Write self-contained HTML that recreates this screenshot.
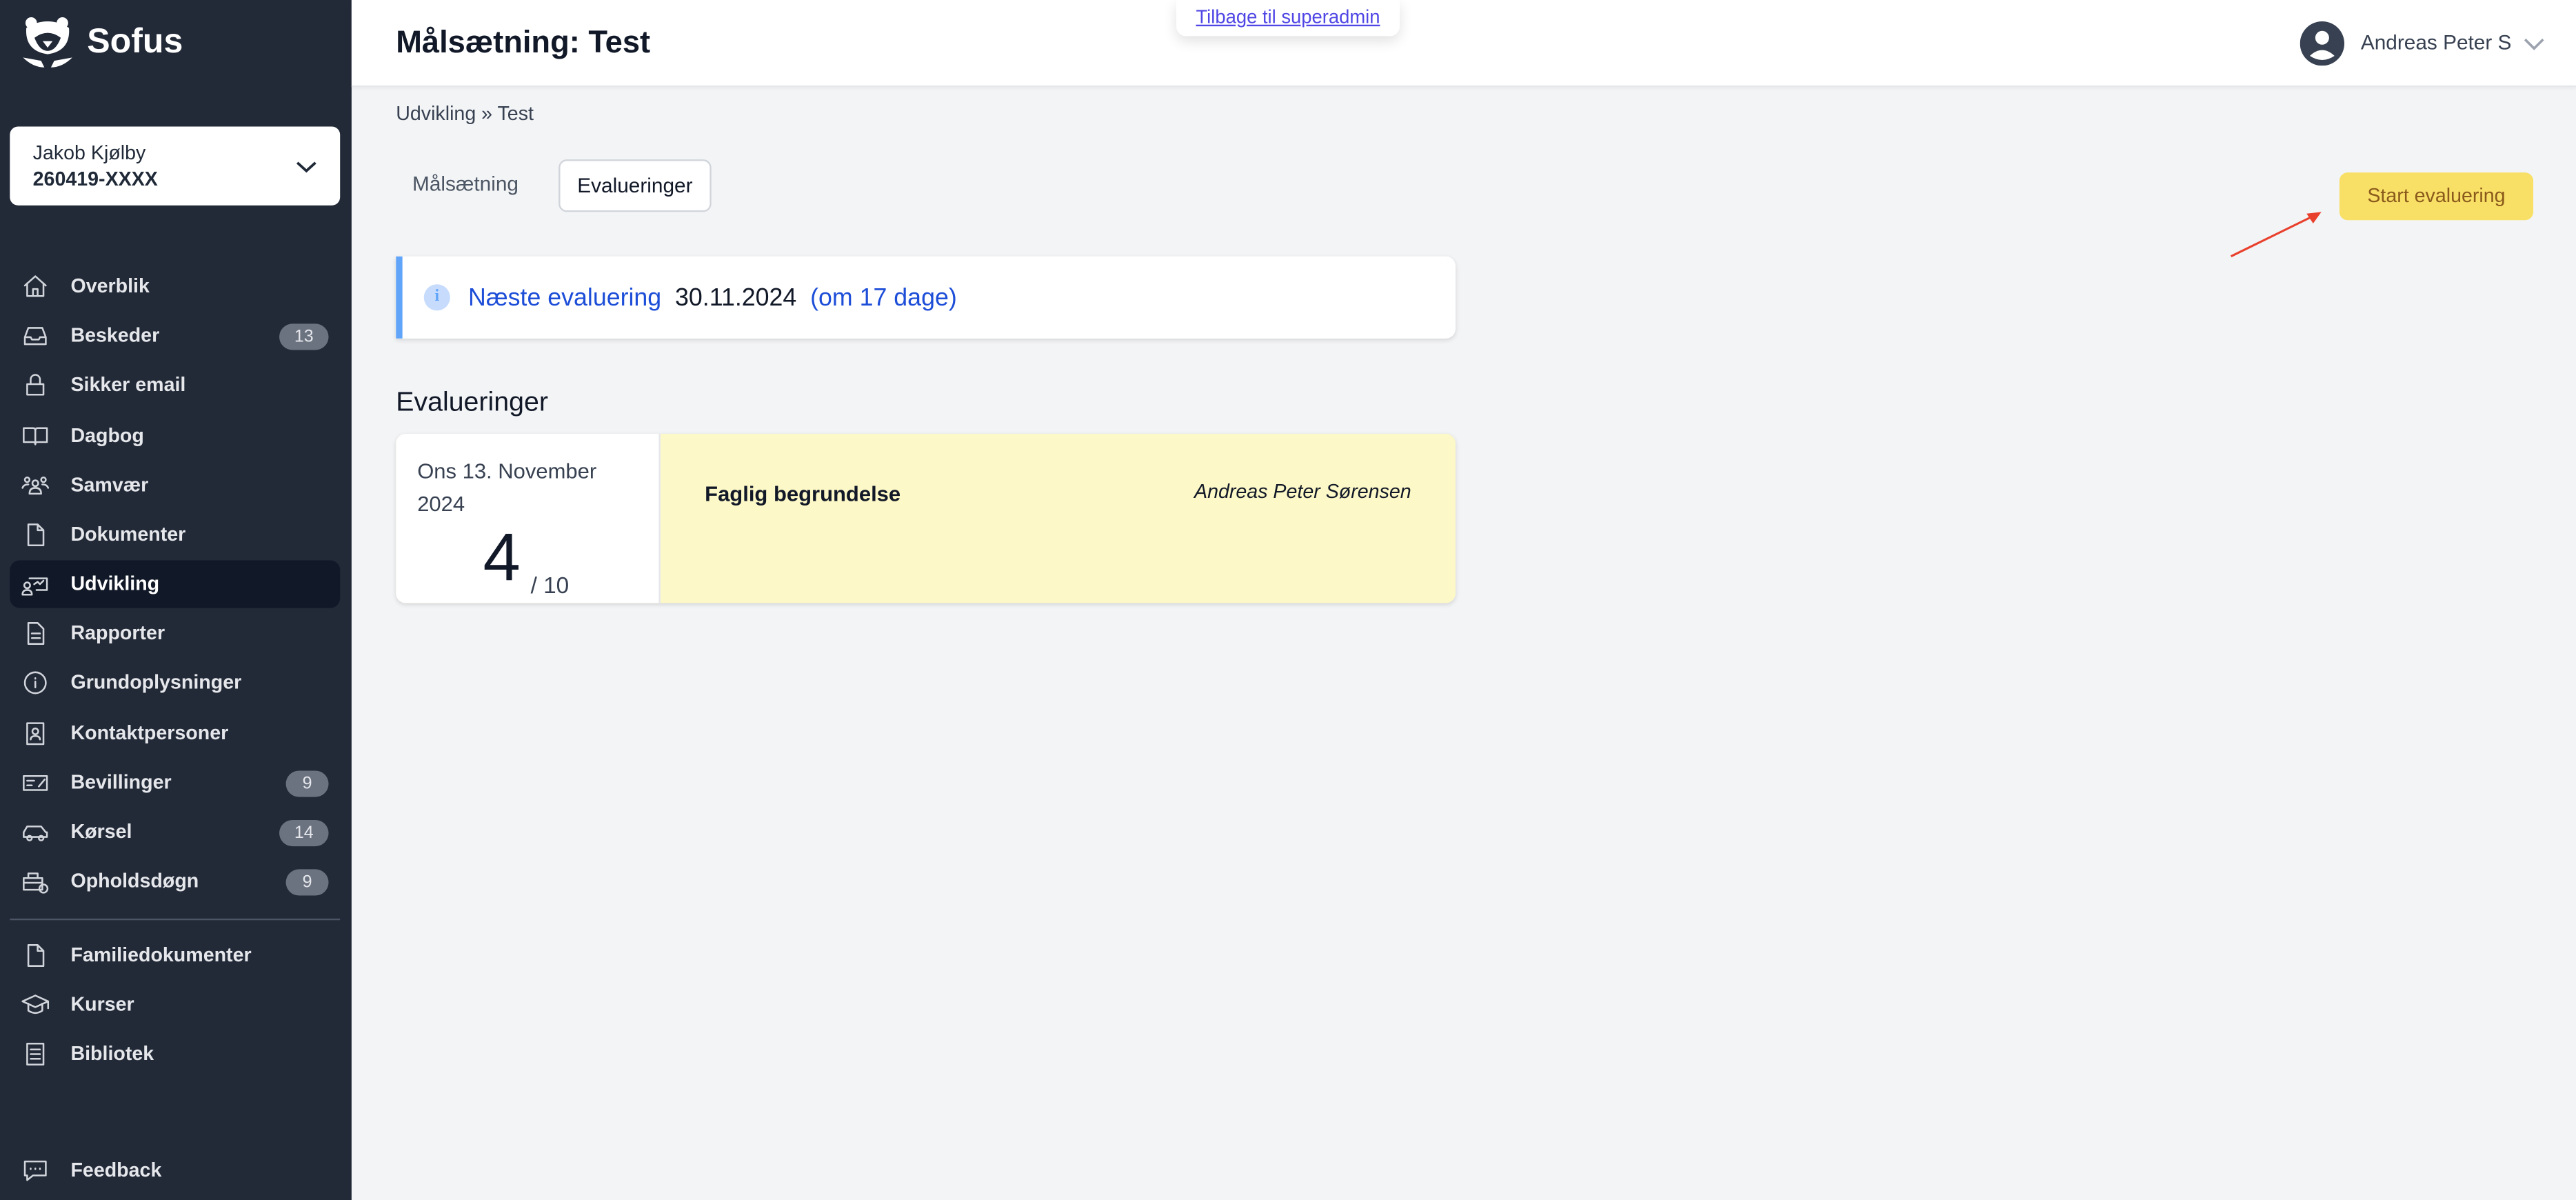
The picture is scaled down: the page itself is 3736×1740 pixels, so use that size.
<!DOCTYPE html>
<html><head><meta charset="utf-8"><style>
*{box-sizing:border-box;margin:0;padding:0}
html,body{width:3736px;height:1740px;overflow:hidden;background:#f3f4f6}
#w{width:1568px;height:731px;transform:scale(2.38265);transform-origin:0 0;position:relative;font-family:"Liberation Sans",sans-serif;background:#f3f4f6}
.sb{position:absolute;left:0;top:0;width:214px;height:731px;background:#222937}
.a{position:absolute}
.nav{position:absolute;left:6px;width:201px;height:29px;color:#e5e7eb;font-size:12px;font-weight:bold;line-height:29px;padding-left:37px;border-radius:6px}
.nav svg{position:absolute;left:7px;top:6px;width:17px;height:17px;fill:none;stroke:#d1d5db;stroke-width:1.5;stroke-linecap:round;stroke-linejoin:round}
.bd{position:absolute;right:7px;top:7px;height:16px;line-height:16px;background:#6b7280;color:#e5e7eb;font-size:10.5px;border-radius:8px;text-align:center;font-weight:normal}
</style></head><body><div id="w">
<div class="sb">
 <svg class="a" style="left:12px;top:9px" width="34" height="34" viewBox="0 0 34 34"><g fill="#fff"><circle cx="7" cy="5" r="3.5"/><circle cx="26" cy="5" r="3.5"/><path d="M4 8 Q3 22 17 24 Q31 22 30 8 Q24 4 17 4 Q10 4 4 8Z"/><path d="M2 26 Q8 32 15 32 L13 28Z M32 26 Q26 32 19 32 L21 28Z"/></g><path d="M9 14 Q17 8 25 14 Q22 22 17 22 Q12 22 9 14Z" fill="#222937"/><path d="M14 16 L20 16 L17 20Z" fill="#fff"/></svg>
 <div class="a" style="left:53px;top:14px;color:#fff;font-size:21px;font-weight:bold">Sofus</div>
 <div class="a" style="left:6px;top:77px;width:201px;height:48px;background:#fff;border-radius:5px;padding:8px 14px;font-size:12px;color:#1f2937;line-height:16px">Jakob Kjølby<br><b>260419-XXXX</b>
  <svg class="a" style="right:14px;top:20px" width="13" height="9" viewBox="0 0 13 9"><path d="M1 2 L6.5 7 L12 2" fill="none" stroke="#1f2937" stroke-width="1.6"/></svg></div>
 <div class="nav" style="top:160px"><svg viewBox="0 0 24 24"><path d="M3 11 L12 3 L21 11 M5 9 V20 H19 V9 M10 20 V14 H14 V20"/></svg>Overblik</div>
 <div class="nav" style="top:190px"><svg viewBox="0 0 24 24"><path d="M3 13 L6 5 H18 L21 13 V19 H3Z M3 13 H8 L9 15 H15 L16 13 H21"/></svg>Beskeder<span class="bd" style="width:30px">13</span></div>
 <div class="nav" style="top:220px"><svg viewBox="0 0 24 24"><path d="M8 11 V7 A4 4 0 0 1 16 7 V11 M5 11 H19 V20 H5Z"/></svg>Sikker email</div>
 <div class="nav" style="top:251px"><svg viewBox="0 0 24 24"><path d="M2 5 H10 Q12 5 12 7 V19 Q12 17 10 17 H2Z M22 5 H14 Q12 5 12 7 V19 Q12 17 14 17 H22Z"/></svg>Dagbog</div>
 <div class="nav" style="top:281px"><svg viewBox="0 0 24 24"><circle cx="12" cy="10" r="2.5"/><circle cx="5" cy="7" r="2"/><circle cx="19" cy="7" r="2"/><path d="M7 19 Q7 14 12 14 Q17 14 17 19Z M1 14 Q2 11 6 11 M23 14 Q22 11 18 11"/></svg>Samvær</div>
 <div class="nav" style="top:311px"><svg viewBox="0 0 24 24"><path d="M6 3 H14 L19 8 V21 H6Z M14 3 V8 H19"/></svg>Dokumenter</div>
 <div class="nav" style="top:341px;background:#111827;color:#fff"><svg viewBox="0 0 24 24"><path d="M7 7 H22 V17 H13 M11 12 L14 10 L16 12 L19 9"/><circle cx="5" cy="13" r="2.5"/><path d="M1 21 Q1 17 5 17 Q9 17 9 21Z"/></svg>Udvikling</div>
 <div class="nav" style="top:371px"><svg viewBox="0 0 24 24"><path d="M6 3 H14 L19 8 V21 H6Z M9 12 H16 M9 16 H16"/></svg>Rapporter</div>
 <div class="nav" style="top:401px"><svg viewBox="0 0 24 24"><circle cx="12" cy="12" r="9"/><path d="M12 11 V16 M12 8 V8.5"/></svg>Grundoplysninger</div>
 <div class="nav" style="top:432px"><svg viewBox="0 0 24 24"><path d="M5 3 H19 V21 H5Z"/><circle cx="12" cy="10" r="2.5"/><path d="M8 17 Q8 14 12 14 Q16 14 16 17"/></svg>Kontaktpersoner</div>
 <div class="nav" style="top:462px"><svg viewBox="0 0 24 24"><path d="M2 6 H22 V18 H2Z M5 10 H11 M5 14 H9 M15 15 L20 9"/></svg>Bevillinger<span class="bd" style="width:26px">9</span></div>
 <div class="nav" style="top:492px"><svg viewBox="0 0 24 24"><path d="M2 16 V12 L5 7 H17 L21 12 H22 V16 Z"/><circle cx="7" cy="17" r="2"/><circle cx="17" cy="17" r="2"/></svg>Kørsel<span class="bd" style="width:30px">14</span></div>
 <div class="nav" style="top:522px"><svg viewBox="0 0 24 24"><path d="M2 9 H18 V19 H2Z M2 13 H18 M6 9 V5 H14 V9"/><circle cx="19" cy="18" r="3.5"/></svg>Opholdsdøgn<span class="bd" style="width:26px">9</span></div>
 <div class="a" style="left:6px;top:559px;width:201px;height:1px;background:#4b5563"></div>
 <div class="nav" style="top:567px"><svg viewBox="0 0 24 24"><path d="M6 3 H14 L19 8 V21 H6Z M14 3 V8 H19"/></svg>Familiedokumenter</div>
 <div class="nav" style="top:597px"><svg viewBox="0 0 24 24"><path d="M1 9 L12 4 L23 9 L12 14Z M6 11 V17 Q12 21 18 17 V11 M23 9 V15"/></svg>Kurser</div>
 <div class="nav" style="top:627px"><svg viewBox="0 0 24 24"><path d="M5 3 H19 V21 H5Z M8 8 H16 M8 12 H16 M8 16 H16"/></svg>Bibliotek</div>
 <div class="nav" style="top:698px"><svg viewBox="0 0 24 24"><path d="M3 4 H21 V16 H10 L5 20 V16 H3Z M8 10 V10.5 M12 10 V10.5 M16 10 V10.5"/></svg>Feedback</div>
</div>
<div class="a" style="left:214px;top:0;width:1354px;height:53px;background:#fff;border-bottom:1px solid #e5e7eb;box-shadow:0 1px 2px rgba(0,0,0,.06)"></div>
<div class="a" style="left:241px;top:16px;font-size:19px;font-weight:bold;color:#111827">Målsætning: Test</div>
<div class="a" style="left:716px;top:0;width:136px;height:22px;background:#fff;border-radius:0 0 6px 6px;box-shadow:0 3px 8px rgba(0,0,0,.12);text-align:center;font-size:11.5px;line-height:22px;color:#4f46e5;text-decoration:underline">Tilbage til superadmin</div>
<svg class="a" style="left:1400px;top:13px" width="27" height="27" viewBox="0 0 27 27"><circle cx="13.5" cy="13.5" r="13.5" fill="#374151"/><circle cx="13.5" cy="10" r="4.2" fill="#fff"/><path d="M6 21 Q13.5 14 21 21 Q13.5 26 6 21Z" fill="#fff"/></svg>
<div class="a" style="left:1437px;top:19px;font-size:12.5px;color:#374151">Andreas Peter S</div>
<svg class="a" style="left:1536px;top:23px" width="13" height="8" viewBox="0 0 13 8"><path d="M1 1 L6.5 6.5 L12 1" fill="none" stroke="#9ca3af" stroke-width="1.5"/></svg>
<div class="a" style="left:241px;top:62px;font-size:12px;color:#374151">Udvikling » Test</div>
<div class="a" style="left:251px;top:105px;font-size:12.5px;color:#4b5563">Målsætning</div>
<div class="a" style="left:340px;top:97px;width:93px;height:32px;background:#fff;border:1px solid #d1d5db;border-radius:5px;font-size:12.5px;color:#111827;text-align:center;line-height:30px">Evalueringer</div>
<div class="a" style="left:1424px;top:105px;width:118px;height:29px;background:#f8df66;border-radius:5px;font-size:12px;color:#8a5a1c;text-align:center;line-height:29px">Start evaluering</div>
<svg class="a" style="left:1355px;top:125px" width="62" height="34" viewBox="0 0 62 34"><path d="M3 31 L52 7" stroke="#e8402c" stroke-width="1.3"/><path d="M58 4 L49 5 L53 11Z" fill="#e8402c"/></svg>
<div class="a" style="left:241px;top:156px;width:645px;height:50px;background:#fff;border-left:4px solid #60a5fa;border-radius:0 6px 6px 0;box-shadow:0 1px 3px rgba(0,0,0,.12)"></div>
<div class="a" style="left:258px;top:173px;width:16px;height:16px;border-radius:8px;background:#c7dcfd;color:#60a5fa;font-size:10px;text-align:center;line-height:16px;font-family:'Liberation Serif',serif;font-weight:bold">i</div>
<div class="a" style="left:285px;top:173px;font-size:15px;color:#1d4ed8">Næste evaluering <span style="color:#111827">&nbsp;30.11.2024</span> &nbsp;(om 17 dage)</div>
<div class="a" style="left:241px;top:236px;font-size:16.5px;color:#111827">Evalueringer</div>
<div class="a" style="left:241px;top:264px;width:645px;height:103px;background:#fdf8c7;border-radius:6px;box-shadow:0 1px 3px rgba(0,0,0,.12);overflow:hidden">
 <div class="a" style="left:0;top:0;width:161px;height:103px;background:#fff;border-right:1px solid #e5e7eb"></div>
 <div class="a" style="left:13px;top:13px;font-size:13px;color:#374151;line-height:20px">Ons 13. November<br>2024</div>
 <div class="a" style="left:53px;top:52px;font-size:41px;color:#111827">4</div>
 <div class="a" style="left:82px;top:84px;font-size:14px;color:#374151">/ 10</div>
 <div class="a" style="left:188px;top:29px;font-size:13px;font-weight:bold;color:#111827">Faglig begrundelse</div>
 <div class="a" style="right:27px;top:28px;font-size:12px;font-style:italic;color:#111827">Andreas Peter Sørensen</div>
</div>
</div></body></html>
